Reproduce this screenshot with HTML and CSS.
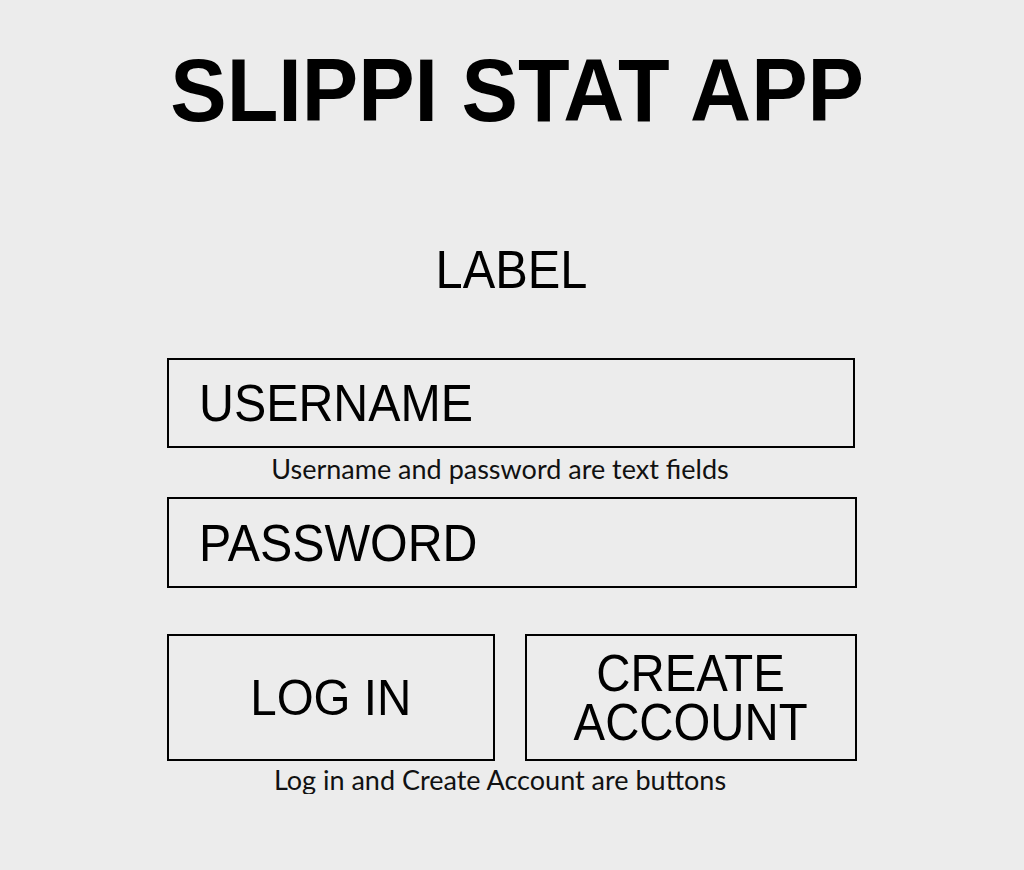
FILE: index.html
```html
<!DOCTYPE html>
<html lang="en">
<head>
<meta charset="utf-8">
<title>Slippi Stat App</title>
<link rel="stylesheet" href="styles.css">
</head>
<body>
<main class="page">
  <h1 class="title"><span class="title-text">SLIPPI STAT APP</span></h1>
  <div class="label"><span class="squeeze">LABEL</span></div>

  <div class="field field-user"><span class="field-text">USERNAME</span></div>
  <p class="note note-fields">Username and password are text fields</p>
  <div class="field field-pass"><span class="field-text">PASSWORD</span></div>

  <div class="actions">
    <button class="btn btn-login" type="button"><span class="squeeze btn-login-text">LOG IN</span></button>
    <button class="btn btn-create" type="button">
      <span class="btn-create-text">
        <span class="btn-line">CREATE</span>
        <span class="btn-line">ACCOUNT</span>
      </span>
    </button>
  </div>
  <p class="note note-buttons">Log in and Create Account are buttons</p>
</main>
</body>
</html>
```

FILE: styles.css
```css
html, body {
  margin: 0;
  padding: 0;
  background: #ececec;
}

body {
  font-family: "Liberation Sans", Arial, sans-serif;
  color: #000;
}

.page {
  width: 690px;
  margin: 0 auto;
  display: flex;
  flex-direction: column;
  align-items: stretch;
}

.squeeze {
  display: inline-block;
  transform: scaleX(0.92);
  transform-origin: center;
}

.title {
  align-self: center;
  margin: 46px 0 0 10px;
  font-size: 89px;
  line-height: 89px;
  font-weight: 700;
  text-align: center;
  white-space: nowrap;
}

.title-text {
  display: inline-block;
  transform: scaleX(0.95);
  transform-origin: center;
}

.label {
  margin-top: 108px;
  font-size: 53px;
  line-height: 53px;
  text-align: center;
}

.field {
  box-sizing: border-box;
  border: 2.5px solid #000;
  display: flex;
  align-items: center;
  padding-left: 30px;
}

.field-user {
  margin-top: 62px;
  height: 90px;
  width: 688px;
}

.field-pass {
  margin-top: 14px;
  height: 91px;
}

.field-text {
  display: inline-block;
  font-size: 52px;
  line-height: 52px;
  transform: scaleX(0.93);
  transform-origin: left center;
  white-space: nowrap;
}

.note {
  margin: 0;
  font-family: "Lato", "Liberation Sans", sans-serif;
  font-size: 27px;
  line-height: 28px;
  text-align: center;
  padding-right: 24px;
  color: #111;
}

.note-fields {
  margin-top: 7px;
}

.note-buttons {
  margin-top: 5px;
}

.actions {
  margin-top: 46px;
  display: flex;
  gap: 30px;
}

.btn {
  box-sizing: border-box;
  height: 127px;
  margin: 0;
  padding: 0;
  background: transparent;
  border: 2.5px solid #000;
  border-radius: 0;
  color: #000;
  font-family: "Liberation Sans", Arial, sans-serif;
  display: flex;
  align-items: center;
  justify-content: center;
  text-align: center;
}

.btn-login {
  width: 328px;
  font-size: 50px;
  line-height: 50px;
}

.btn-login-text {
  transform: scaleX(0.95);
}

.btn-create {
  width: 332px;
  font-size: 52px;
  line-height: 49px;
}

.btn-create-text {
  display: flex;
  flex-direction: column;
  align-items: center;
  gap: 0;
  transform: scaleX(0.91);
  transform-origin: center;
}

.btn-line {
  display: block;
  height: 49px;
  line-height: 49px;
  overflow: visible;
  white-space: nowrap;
}
```
